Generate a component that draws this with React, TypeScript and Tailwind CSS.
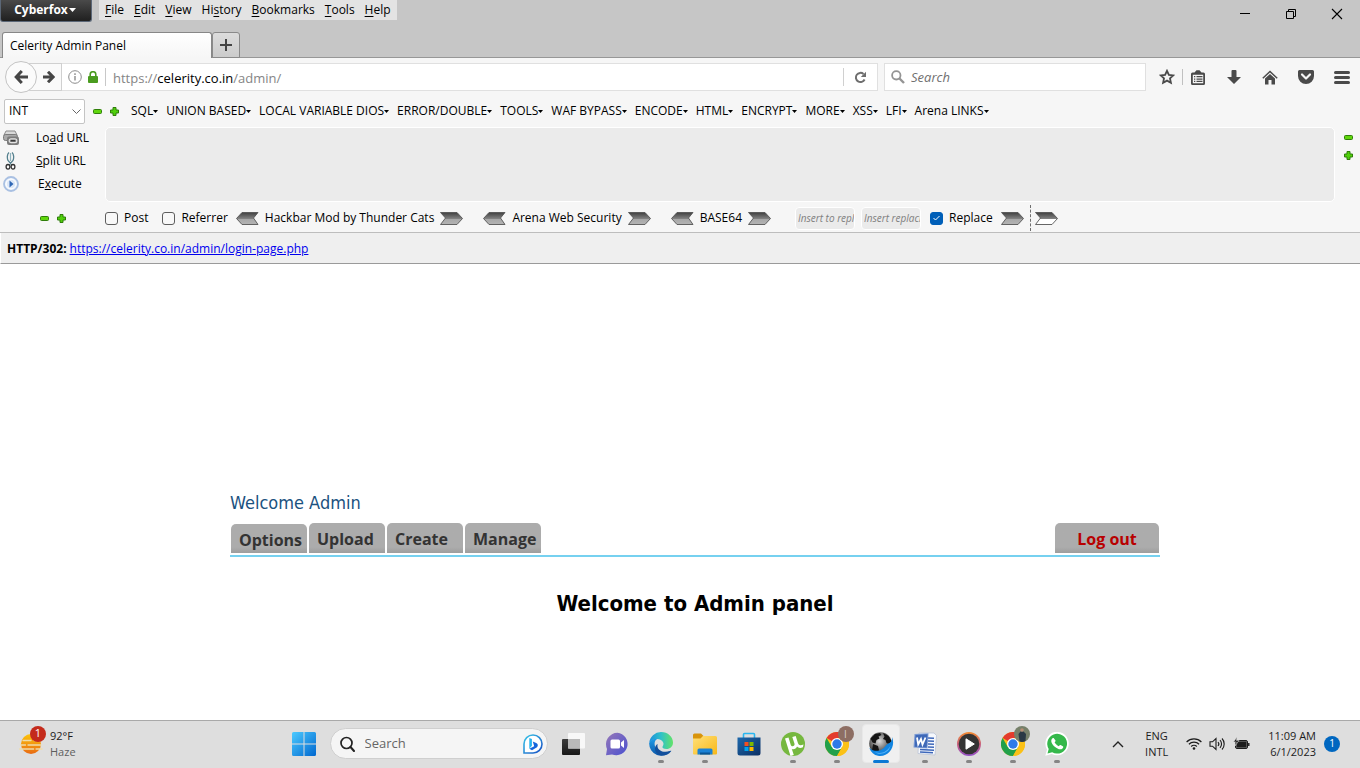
import { useState, type ReactNode } from "react";

/* ---------- shared glyphs ---------- */

function Minus() {
  return (
    <svg width="9" height="9" viewBox="0 0 9 9" aria-hidden="true">
      <rect x="0.5" y="2.5" width="8" height="4" rx="1" fill="#5fd60c" stroke="#2f7d0a" />
    </svg>
  );
}

function Plus() {
  return (
    <svg width="9" height="9" viewBox="0 0 9 9" aria-hidden="true">
      <path d="M3 .5h3V3h2.500v3H6v2.500H3V6H.5V3H3z" fill="#4fd00a" stroke="#2f7d0a" strokeLinejoin="round" />
    </svg>
  );
}

function Chevron({ left = false, hollow = false }: { left?: boolean; hollow?: boolean }) {
  const id = `chev-${left ? "l" : "r"}-${hollow ? "h" : "f"}`;
  const shape = left ? "M6 .5H22L17.500 6 22 12.500H6L.5 6.500z" : "M.5 .5H17L22.500 6.500 17 12.500H.5L5.500 6z";
  return (
    <svg width="23" height="13" viewBox="0 0 23 13" aria-hidden="true">
      <defs>
        <linearGradient id={id} x1="0" y1="0" x2="0" y2="1">
          <stop offset="0" stopColor="#404040" />
          <stop offset=".5" stopColor="#808080" />
          <stop offset=".52" stopColor={hollow ? "#ffffff" : "#a6a6a6"} />
          <stop offset="1" stopColor={hollow ? "#ffffff" : "#b4b4b4"} />
        </linearGradient>
      </defs>
      <path d={shape} fill={`url(#${id})`} stroke="#555" strokeWidth=".9" />
    </svg>
  );
}

function Caret() {
  return (
    <svg width="5" height="3" viewBox="0 0 5 3" aria-hidden="true">
      <path d="M0 0h5L2.500 3z" fill="#000" />
    </svg>
  );
}

/* ---------- title bar ---------- */

const menus = [
  ["", "F", "ile"],
  ["", "E", "dit"],
  ["", "V", "iew"],
  ["Hi", "s", "tory"],
  ["", "B", "ookmarks"],
  ["", "T", "ools"],
  ["", "H", "elp"],
];

function TitleBar() {
  return (
    <header className="flex h-[58px] flex-col justify-between bg-[#c6c6c6] shadow-[inset_0_-1px_0_#979797]">
      <div className="flex items-start">
        <button className="flex h-[22px] w-[92px] items-center justify-center gap-px rounded-b-[3px] border border-t-0 border-[#5b6777] bg-linear-to-b from-[#4a4a4a] to-[#202020] pr-0.5 pb-0.5 text-[12px] font-bold text-white">
          Cyberfox
          <svg width="7" height="4" viewBox="0 0 7 4" aria-hidden="true">
            <path d="M0 0h7L3.500 4z" fill="#fff" />
          </svg>
        </button>
        <nav className="ml-[7px] flex h-5 items-center gap-2.5 bg-[#e3e3e3] px-1.5">
          {menus.map(([a, key, b]) => (
            <button key={key + b} className="leading-5">
              {a}
              <span className="underline underline-offset-2">{key}</span>
              {b}
            </button>
          ))}
        </nav>
        <div className="ml-auto flex h-7 items-center">
          <button aria-label="Minimize" className="flex w-[46px] justify-center">
            <svg width="10" height="10" viewBox="0 0 10 10"><path d="M0 4.500h10" stroke="#000" /></svg>
          </button>
          <button aria-label="Restore" className="flex w-[46px] justify-center">
            <svg width="10" height="10" viewBox="0 0 10 10" fill="none" stroke="#000"><path d="M.5 2.500h7v7h-7zM2.500 2V.5h7v7H8" /></svg>
          </button>
          <button aria-label="Close" className="flex w-[46px] justify-center">
            <svg width="12" height="12" viewBox="0 0 12 12"><path d="M1 1l10 10M11 1L1 11" stroke="#000" strokeWidth="1.100" /></svg>
          </button>
        </div>
      </div>
      <div className="flex items-end pl-0.5">
        <button className="h-[26px] w-[210px] rounded-t-[3px] border border-b-0 border-[#878787] bg-linear-to-b from-white to-[#f6f6f6] px-[7px] text-left">
          Celerity Admin Panel
        </button>
        <button aria-label="New tab" className="flex h-[26px] w-7 items-center justify-center rounded-t-[3px] border border-[#8a8a8a] bg-linear-to-b from-[#dcdcdc] to-[#cbcbcb]">
          <svg width="12" height="12" viewBox="0 0 12 12"><path d="M6 0v12M0 6h12" stroke="#444" strokeWidth="2" /></svg>
        </button>
      </div>
    </header>
  );
}

/* ---------- navigation bar ---------- */

function AddressField() {
  const [url, setUrl] = useState("https://celerity.co.in/admin/");
  const parts = /^(\w+:\/\/)?([^/]*)(.*)$/.exec(url);
  return (
    <div className="grid min-w-0 flex-1 items-center pt-px text-[13px] leading-5">
      <div aria-hidden="true" className="col-start-1 row-start-1 overflow-hidden whitespace-pre text-[#858585]">
        {parts?.[1]}
        <span className="text-black">{parts?.[2]}</span>
        {parts?.[3]}
      </div>
      <input
        aria-label="Address"
        value={url}
        onChange={(e) => setUrl(e.target.value)}
        className="col-start-1 row-start-1 w-full bg-transparent text-transparent caret-black outline-none"
      />
    </div>
  );
}

function ToolButton({ label, className = "", children }: { label: string; className?: string; children: ReactNode }) {
  return (
    <button aria-label={label} className={`flex size-9 items-center justify-center ${className}`}>
      {children}
    </button>
  );
}

function NavBar() {
  return (
    <div className="flex h-[38px] items-center pl-[5px]">
      <button aria-label="Back" className="z-10 flex size-8 shrink-0 items-center justify-center rounded-full border border-[#c4c4c4] bg-[#fbfbfb]">
        <svg width="14" height="14" viewBox="0 0 14 14" fill="none" stroke="#464646" strokeWidth="3"><path d="M7.800 1L2.200 7l5.600 6M2.500 7H14" /></svg>
      </button>
      <button aria-label="Forward" className="-ml-2 flex h-7 w-[33px] shrink-0 items-center justify-end border border-[#d0d0d0] bg-[#fafafa] pr-1.5">
        <svg width="12" height="12" viewBox="0 0 12 12" fill="none" stroke="#464646" strokeWidth="3"><path d="M5 .8L10.200 6 5 11.200M10 6H0" /></svg>
      </button>
      <div className="flex h-7 min-w-0 flex-1 items-center border border-l-0 border-[#e0e0e0] bg-white pl-1.5">
        <svg width="14" height="14" viewBox="0 0 14 14" fill="none" aria-hidden="true">
          <circle cx="7" cy="7" r="6.300" stroke="#8c8c8c" />
          <path d="M7 6v4.500M7 3.300v1.600" stroke="#8c8c8c" strokeWidth="1.400" />
        </svg>
        <svg width="10" height="12" viewBox="0 0 10 12" className="ml-1.5 shrink-0" aria-hidden="true">
          <path d="M2.200 6V3.500a2.800 2.800 0 0 1 5.600 0V6" fill="none" stroke="#4a9c1f" strokeWidth="1.600" />
          <rect y="5" width="10" height="7" rx="1" fill="#4a9c1f" />
        </svg>
        <span className="mx-[7px] h-[18px] w-px shrink-0 bg-[#c8c8c8]" />
        <AddressField />
        <button aria-label="Reload" className="flex h-[18px] w-[34px] shrink-0 items-center justify-center border-l border-[#d0d0d0]">
          <svg width="13" height="13" viewBox="0 0 13 13" aria-hidden="true">
            <path d="M10.600 8.500A4.600 4.600 0 1 1 9.500 3" fill="none" stroke="#6e6e6e" strokeWidth="2" />
            <path d="M12 .8V6H6.800z" fill="#6e6e6e" />
          </svg>
        </button>
      </div>
      <label className="ml-1.5 flex h-7 w-[262px] shrink-0 items-center gap-1.5 border border-[#e0e0e0] bg-white pl-1.5">
        <svg width="14" height="14" viewBox="0 0 14 14" fill="none" stroke="#949494" aria-hidden="true">
          <circle cx="5.300" cy="5.300" r="4.200" strokeWidth="1.800" />
          <path d="M8.500 8.500L13 13" strokeWidth="2.400" />
        </svg>
        <input aria-label="Search" placeholder="Search" className="min-w-0 flex-1 pt-0.5 text-[13px] outline-none placeholder:text-[#707070] placeholder:italic" />
      </label>
      <div className="ml-[3px] flex items-center text-[#4a4a4a]">
        <ToolButton label="Bookmark this page" className="-mr-[3px]">
          <svg width="16" height="16" viewBox="0 0 16 16" fill="none" stroke="currentColor" strokeWidth="1.800"><path d="M8 1.800l1.900 4.100 4.400.5-3.300 3 .9 4.400L8 11.600l-3.900 2.200.9-4.400-3.300-3 4.400-.5z" /></svg>
        </ToolButton>
        <span className="h-4 w-px bg-[#c0c0c0]" />
        <ToolButton label="Reading list" className="-ml-[3px]">
          <svg width="14" height="15" viewBox="0 0 14 15" fill="currentColor">
            <path fillRule="evenodd" d="M3.500 2.500L5.500.3h3l2 2.200h2A1.500 1.500 0 0 1 14 4v9.500a1.500 1.500 0 0 1-1.500 1.500h-11A1.500 1.500 0 0 1 0 13.500V4a1.500 1.500 0 0 1 1.500-1.500zM1.800 4.800v8.400h10.400V4.800z" />
            <path d="M3 6h1.300v1.300H3zM5.500 6h6v1.300h-6zM3 8.400h1.300v1.300H3zM5.500 8.400h6v1.300h-6zM3 10.800h1.300v1.300H3zM5.500 10.800h6v1.300h-6z" />
          </svg>
        </ToolButton>
        <ToolButton label="Downloads">
          <svg width="14" height="14" viewBox="0 0 14 14" fill="currentColor"><path d="M4.500 1a1 1 0 0 1 1-1h3a1 1 0 0 1 1 1v6H14L7 14 0 7h4.500z" /></svg>
        </ToolButton>
        <ToolButton label="Home">
          <svg width="16" height="15" viewBox="0 0 16 15"><path d="M.8 8.300L8 1.500l7.200 6.800" fill="none" stroke="currentColor" strokeWidth="1.500" /><path d="M8 4L3 8.600V14.500h3.500V10h3v4.500H13V8.600z" fill="currentColor" /></svg>
        </ToolButton>
        <ToolButton label="Save to Pocket">
          <svg width="16" height="14" viewBox="0 0 16 14"><path d="M1.500 0h13A1.500 1.500 0 0 1 16 1.500V6A8 8 0 0 1 0 6V1.500A1.500 1.500 0 0 1 1.500 0z" fill="currentColor" /><path d="M4 4.500l4 4 4-4" fill="none" stroke="#f6f6f6" strokeWidth="2.200" strokeLinecap="round" strokeLinejoin="round" /></svg>
        </ToolButton>
        <ToolButton label="Open menu">
          <svg width="16" height="13" viewBox="0 0 16 13" stroke="currentColor" strokeWidth="3" strokeLinecap="round"><path d="M1.500 1.500h13M1.500 6.500h13M1.500 11.500h13" /></svg>
        </ToolButton>
      </div>
    </div>
  );
}

/* ---------- hackbar ---------- */

const hackMenus = ["SQL", "UNION BASED", "LOCAL VARIABLE DIOS", "ERROR/DOUBLE", "TOOLS", "WAF BYPASS", "ENCODE", "HTML", "ENCRYPT", "MORE", "XSS", "LFI", "Arena LINKS"];

function CheckField({ label, checked = false }: { label: string; checked?: boolean }) {
  return (
    <label className="flex items-center gap-1.5">
      <span className="grid size-[13px] place-items-center">
        <input
          type="checkbox"
          defaultChecked={checked}
          className="peer col-start-1 row-start-1 size-[13px] appearance-none rounded-[3px] border border-[#5e5e5e] bg-[#f8f8f8] checked:border-[#005fb8] checked:bg-[#005fb8]"
        />
        <svg width="7" height="6" viewBox="0 0 7 6" className="pointer-events-none invisible col-start-1 row-start-1 peer-checked:visible" aria-hidden="true">
          <path d="M.5 3l2 2 4-4" fill="none" stroke="#fff" />
        </svg>
      </span>
      {label}
    </label>
  );
}

function Stepper({ name, children }: { name: string; children: ReactNode }) {
  return (
    <div className="flex items-center gap-1.5">
      <button aria-label={`Previous ${name}`}><Chevron left /></button>
      <span>{children}</span>
      <button aria-label={`Next ${name}`}><Chevron /></button>
    </div>
  );
}

function PrinterIcon() {
  return (
    <svg width="16" height="15" viewBox="0 0 16 15" aria-hidden="true">
      <path d="M3 1h9l2 4H1z" fill="#d9d9d9" stroke="#8b8b8b" />
      <rect x=".5" y="4.500" width="14" height="6" rx="2" fill="#a9a9a9" stroke="#7b7b7b" />
      <rect x="4" y="6.500" width="12" height="8.500" rx="2" fill="#7c7c7c" />
      <rect x="6.200" y="8.800" width="7.600" height="3.800" rx="1.900" fill="none" stroke="#e4e4e4" strokeWidth="1.200" />
      <path d="M8 10.700h4" stroke="#333" strokeWidth="1.200" />
    </svg>
  );
}

function ScissorsIcon() {
  return (
    <svg width="16" height="18" viewBox="0 0 16 18" fill="none" aria-hidden="true">
      <path d="M6 .5C4 2 4 6 5 8.500L9 13M9 .5C11 2 11 6 10 8.500L6 13" stroke="#54808e" strokeWidth="1.300" />
      <path d="M7.500 1v8" stroke="#8fb2bd" strokeWidth="1.200" />
      <ellipse cx="5" cy="14.800" rx="1.900" ry="2.300" stroke="#333" strokeWidth="1.300" />
      <ellipse cx="10" cy="14.800" rx="1.900" ry="2.300" stroke="#333" strokeWidth="1.300" />
    </svg>
  );
}

function ExecuteIcon() {
  return (
    <svg width="16" height="16" viewBox="0 0 16 16" aria-hidden="true">
      <circle cx="8" cy="8" r="7" fill="#eef4fc" stroke="#a9c0e2" strokeWidth="1.800" />
      <circle cx="8" cy="8" r="4.800" fill="#dce8f8" stroke="#fff" />
      <path d="M6.500 4.500L10.500 8l-4 3.500z" fill="#2f67b5" />
    </svg>
  );
}

function Hackbar() {
  return (
    <section aria-label="Hackbar" className="flex flex-col border-b border-[#bdbdbd] pb-0.5">
      <div className="flex h-[30px] items-center pl-1">
        <div className="grid h-[25px] w-[81px] shrink-0 items-center">
          <select aria-label="Injection type" className="col-start-1 row-start-1 h-[25px] appearance-none rounded-[2px] border border-[#c4c4c4] bg-white px-1">
            <option>INT</option>
            <option>STRING</option>
          </select>
          <svg width="9" height="5" viewBox="0 0 9 5" className="pointer-events-none col-start-1 row-start-1 mr-1 justify-self-end" aria-hidden="true">
            <path d="M.5 .5l4 4 4-4" fill="none" stroke="#666" />
          </svg>
        </div>
        <button aria-label="Remove" className="ml-2"><Minus /></button>
        <button aria-label="Add" className="ml-2"><Plus /></button>
        <div className="ml-3 flex items-center gap-2 whitespace-nowrap">
          {hackMenus.map((m) => (
            <button key={m} className="flex items-center">
              {m}
              <Caret />
            </button>
          ))}
        </div>
      </div>
      <div className="flex">
        <div className="flex w-[105px] shrink-0 flex-col pl-[3px]">
          <button className="flex h-[23px] items-center gap-[17px]"><PrinterIcon /><span>Lo<u>a</u>d URL</span></button>
          <button className="flex h-[23px] items-center gap-[17px]"><ScissorsIcon /><span><u>S</u>plit URL</span></button>
          <button className="flex h-[23px] items-center gap-[19px]"><ExecuteIcon /><span>E<u>x</u>ecute</span></button>
        </div>
        <textarea aria-label="Request URL" className="mt-px h-[75px] min-w-0 flex-1 resize-none rounded-[5px] border border-white bg-[#ebebeb] outline-none" />
        <div className="flex w-[25px] flex-col items-center gap-[9px] pt-[7px] pl-0.5">
          <button aria-label="Shrink field"><Minus /></button>
          <button aria-label="Grow field"><Plus /></button>
        </div>
      </div>
      <div className="flex h-7 items-center pt-1 whitespace-nowrap">
        <div className="flex w-[105px] shrink-0 gap-2 pl-10">
          <button aria-label="Smaller"><Minus /></button>
          <button aria-label="Larger"><Plus /></button>
        </div>
        <div className="flex items-center gap-3.5">
          <CheckField label="Post" />
          <CheckField label="Referrer" />
        </div>
        <div className="ml-2 flex items-center gap-5">
          <Stepper name="Hackbar Mod">Hackbar Mod by Thunder Cats</Stepper>
          <Stepper name="Arena">Arena Web Security</Stepper>
          <Stepper name="Base64">BASE64</Stepper>
        </div>
        <div className="ml-6 flex items-center gap-1.5">
          <input aria-label="Text to replace" placeholder="Insert to replace" className="h-[23px] w-[60px] rounded-[4px] border border-white bg-[#ebebeb] pl-0.5 text-[10px] outline-none placeholder:text-[#808080] placeholder:italic" />
          <input aria-label="Replacement" placeholder="Insert replacing" className="h-[23px] w-[60px] rounded-[4px] border border-white bg-[#ebebeb] pl-0.5 text-[10px] outline-none placeholder:text-[#808080] placeholder:italic" />
        </div>
        <div className="ml-[9px] flex items-center gap-2">
          <CheckField label="Replace" checked />
          <button aria-label="Apply replacement"><Chevron /></button>
        </div>
        <span className="ml-1.5 h-[26px] border-l border-dashed border-[#6f6f6f]" />
        <button aria-label="More tools" className="ml-1"><Chevron hollow /></button>
      </div>
    </section>
  );
}

/* ---------- page ---------- */

function Page() {
  return (
    <main className="flex-1 bg-white pl-[30px] font-['DejaVu_Sans_Condensed','DejaVu_Sans',sans-serif]">
      <div className="mx-auto max-w-[930px] pt-[227px]">
        <p className="text-[18px] leading-6 text-[#1b5280]">Welcome Admin</p>
        <nav className="mt-2 flex items-end justify-between border-b-2 border-[#76d1f0] px-px pb-0.5 font-['Open_Sans','Noto_Sans',sans-serif] text-[16px] font-bold text-[#333]">
          <div className="flex items-end gap-0.5">
            {["Options", "Upload", "Create", "Manage"].map((t) => (
              <a key={t} href="#" className="h-[30px] w-[76px] rounded-t-[5px] bg-linear-to-b from-[#acacac] from-80% to-[#9d9d9d] pl-2 leading-8 first:h-[29px]">
                {t}
              </a>
            ))}
          </div>
          <a href="#" className="h-[30px] w-[104px] rounded-t-[5px] bg-linear-to-b from-[#acacac] from-80% to-[#9d9d9d] text-center leading-8 text-[#b80000]">
            Log out
          </a>
        </nav>
        <h1 className="mt-[33px] text-center text-[22px] leading-7 font-bold text-black">Welcome to Admin panel</h1>
      </div>
    </main>
  );
}

/* ---------- taskbar ---------- */

function StartIcon() {
  return (
    <svg width="24" height="24" viewBox="0 0 24 24">
      <defs><linearGradient id="start" x1="0" y1="0" x2="1" y2="1" gradientUnits="objectBoundingBox"><stop offset="0" stopColor="#4ccaff" /><stop offset="1" stopColor="#0067cf" /></linearGradient></defs>
      <path d="M1.500 0H11.500V11.500H0V1.500Q0 0 1.500 0zM12.500 0H22.500Q24 0 24 1.500V11.500H12.500zM0 12.500H11.500V24H1.500Q0 24 0 22.500zM12.500 12.500H24V22.500Q24 24 22.500 24H12.500z" fill="url(#start)" />
    </svg>
  );
}

function BingIcon() {
  return (
    <svg width="20" height="20" viewBox="0 0 20 20">
      <defs><linearGradient id="bing" x1="0" y1="0" x2="1" y2="1"><stop offset="0" stopColor="#3cc7e8" /><stop offset="1" stopColor="#174fc4" /></linearGradient></defs>
      <path d="M1 19V10a9 9 0 1 1 9 9z" fill="#fff" stroke="url(#bing)" strokeWidth="1.600" />
      <path d="M6.300 4l2.600 1v6.800l-2.600 3z" fill="#27b4ee" />
      <path d="M9.800 7.500l3.400 1.400a2.600 2.600 0 0 1 .8 4.300L9 16.300 6.300 14.800l4.900-2.500z" fill="#1666dc" />
    </svg>
  );
}

function TaskViewIcon() {
  return (
    <svg width="24" height="24" viewBox="0 0 24 24">
      <defs><linearGradient id="tv" x1="0" y1="0" x2="0" y2="1"><stop offset="0" stopColor="#3c3c3c" /><stop offset="1" stopColor="#181818" /></linearGradient></defs>
      <rect x="1" y="7" width="18" height="16" rx="1" fill="url(#tv)" />
      <rect x="7" y="1" width="17" height="15.500" rx="1" fill="#f8f8f8" />
      <path d="M7 7h12v9.500H7z" fill="#b9b9b9" />
    </svg>
  );
}

function ChatIcon() {
  return (
    <svg width="24" height="24" viewBox="0 0 24 24">
      <defs><linearGradient id="chat" x1="0" y1="0" x2="1" y2="1"><stop offset="0" stopColor="#9678b8" /><stop offset="1" stopColor="#4a50d0" /></linearGradient></defs>
      <path d="M12.500 .8a11.300 11.300 0 1 1-5.500 21.700L1 23.200 2 17A11.500 11.500 0 0 1 12.500 .8z" fill="url(#chat)" />
      <rect x="5.500" y="7.500" width="9.500" height="9" rx="1.500" fill="#fff" />
      <path d="M16 10.500l3-2.500v8l-3-2.500z" fill="#fff" />
    </svg>
  );
}

function EdgeIcon() {
  return (
    <svg width="24" height="24" viewBox="0 0 24 24">
      <defs>
        <linearGradient id="edgeTop" x1="0" y1=".5" x2="1" y2=".5"><stop offset="0" stopColor="#1b8fdc" /><stop offset=".5" stopColor="#2fc1c8" /><stop offset="1" stopColor="#63e368" /></linearGradient>
        <linearGradient id="edgeLow" x1="0" y1="0" x2="0" y2="1"><stop offset="0" stopColor="#1e9be6" /><stop offset="1" stopColor="#0c56a8" /></linearGradient>
      </defs>
      <path d="M.2 11A12 12 0 0 1 12 0c7 0 12 5 12 10.500 0 4-3 6.500-6.500 6.500-3 0-4.500-1.200-4-2.300.8-1.500 1.300-2.700.8-4C13 7.500 10 6.500 7 7 3.500 7.500.8 9 .2 11z" fill="url(#edgeTop)" />
      <path d="M.2 11C1.500 7.500 5 6.300 8.500 6.800c-3 1.500-3.500 5-2.300 8.200 1.800 4.800 8.500 7 15.500 4A12 12 0 0 1 .2 11z" fill="url(#edgeLow)" />
      <path d="M8.700 12c-1.700 5.500 5 10 13 6.700.5-.2.700.1.400.5-3.500 4.800-9.500 5.300-13 3C5 19.500 5 14 8.700 12z" fill="#124f9c" />
    </svg>
  );
}

function ExplorerIcon() {
  return (
    <svg width="24" height="24" viewBox="0 0 24 24">
      <defs><linearGradient id="fold" x1="0" y1="0" x2="1" y2="1"><stop offset="0" stopColor="#ffe07a" /><stop offset="1" stopColor="#f8b818" /></linearGradient></defs>
      <path d="M0 3a1.500 1.500 0 0 1 1.500-1.500H8L10.500 4 8 7H0z" fill="#d8940c" />
      <path d="M0 6.500h7.500L10 4h12.500A1.500 1.500 0 0 1 24 5.500V21.500a1 1 0 0 1-1 1H1a1 1 0 0 1-1-1z" fill="url(#fold)" />
      <path d="M4.500 22.500V18a1.500 1.500 0 0 1 1.500-1.500h12a1.500 1.500 0 0 1 1.500 1.500v4.500z" fill="#1b82d6" />
      <path d="M7 20.500h10v2H7z" fill="#0a5596" />
    </svg>
  );
}

function StoreIcon() {
  return (
    <svg width="24" height="24" viewBox="0 0 24 24">
      <defs><linearGradient id="store" x1="0" y1="0" x2="1" y2="1"><stop offset="0" stopColor="#1d68ac" /><stop offset="1" stopColor="#0c2f63" /></linearGradient></defs>
      <path d="M6.500 6V2.500a1 1 0 0 1 1-1h9a1 1 0 0 1 1 1V6" fill="none" stroke="#28b6f0" strokeWidth="1.600" />
      <path d="M.5 5.500h23V21a2.500 2.500 0 0 1-2.500 2.500H3A2.500 2.500 0 0 1 .5 21z" fill="url(#store)" />
      <path d="M7.500 10h4v4h-4z" fill="#f25022" /><path d="M12.500 10h4v4h-4z" fill="#7fba00" /><path d="M7.500 15h4v4h-4z" fill="#00a4ef" /><path d="M12.500 15h4v4h-4z" fill="#ffb900" />
    </svg>
  );
}

function TorrentIcon() {
  return (
    <svg width="24" height="24" viewBox="0 0 24 24">
      <circle cx="12" cy="12" r="12" fill="#76b83f" />
      <path d="M4 6.500l3.500-1 2.300 7.500c.8 2.300 4.400 1.300 3.700-1.200L11.300 5l3.400-1 2.300 7.300c.7 2 2.500 2.400 5.500 1.200l-.6 2.700c-2.400 1.300-4.700.8-5.900-.7-.9 2.400-3.200 3.200-5.200 2.400l2 6-3.300 1z" fill="#fff" />
    </svg>
  );
}

function ChromeIcon() {
  return (
    <svg width="24" height="24" viewBox="0 0 24 24">
      <circle cx="12" cy="12" r="12" fill="#fbc116" />
      <path d="M12 12L1.600 6A12 12 0 0 1 22.400 6H12z" fill="#e33b2e" />
      <path d="M1.600 6A12 12 0 0 0 12 24l5.200-9L12 12 6.800 15z" fill="#22a04a" />
      <path d="M12 6H22.400A12 12 0 0 1 12 24l5.200-9z" fill="#fbc116" />
      <circle cx="12" cy="12" r="6" fill="#fff" />
      <circle cx="12" cy="12" r="4.700" fill="#2d7ae8" />
    </svg>
  );
}

function GlobeIcon() {
  return (
    <svg width="26" height="24" viewBox="0 0 26 24">
      <defs><radialGradient id="globe" cx=".45" cy=".4" r=".65"><stop offset="0" stopColor="#dcdcdc" /><stop offset=".5" stopColor="#7c7c7c" /><stop offset="1" stopColor="#161616" /></radialGradient></defs>
      <circle cx="12.500" cy="11.500" r="11.300" fill="url(#globe)" />
      <path d="M2.500 6.500L7 2l5-1 1.500 2-3 1.500 1 2-3 1.500-1 3.500-3-1zM15 1l5.500 3 3 5-2.500 3-2.500-1-1-3-2.500-1 1.500-2.500zM5 12l5 2 1 4-2.500 3.500L4 18.500z" fill="#141414" />
      <path d="M24 5C28 14 21 25.500 10 23.700c-4-.6-7-3.200-8.700-7.700C6 20 12 19.500 15.500 16.300c1.800-1.700 2.500-3.800 4.800-4.800C23 10.300 24.300 8.500 24 5z" fill="#1285e0" />
      <path d="M5 19.300c6.500 3.200 14 1.700 17.500-5.800-1.200 6.500-8 9.500-13.500 7.700z" fill="#5ab6fa" />
    </svg>
  );
}

function WordIcon() {
  return (
    <svg width="24" height="24" viewBox="0 0 24 24">
      <path d="M6 1h15l2.500 2.500-1.500 19.500L5 21.500z" fill="#f6f8fc" stroke="#b3bfd4" strokeWidth=".7" />
      <path d="M15 6l6 .3M15 9l6 .3M15 12l6 .3M15 15l6 .3M7 17.500l14 .8M7 20l13 .8" stroke="#3e68ba" strokeWidth="1.600" />
      <path d="M1.500 2l14-.8L14.500 16.500 .5 15.500z" fill="#7a9ad4" />
      <path d="M2.500 3l12-.8-.8 13.200-12-.6z" fill="#3f69b8" />
      <path d="M4 5.500l1.200 7L8 7l1.500 5.500 3-7" fill="none" stroke="#fff" strokeWidth="1.800" />
    </svg>
  );
}

function MediaIcon() {
  return (
    <svg width="24" height="24" viewBox="0 0 24 24">
      <defs><linearGradient id="media" x1="0" y1="0" x2="0" y2="1"><stop offset="0" stopColor="#f38a2e" /><stop offset=".6" stopColor="#c05c8c" /><stop offset="1" stopColor="#9150c8" /></linearGradient></defs>
      <circle cx="12" cy="12" r="12" fill="url(#media)" />
      <circle cx="12" cy="12" r="10.300" fill="#333" />
      <path d="M9 6.800v10.400L17.300 12z" fill="#fff" stroke="#fff" strokeLinejoin="round" />
    </svg>
  );
}

function WhatsAppIcon() {
  return (
    <svg width="24" height="24" viewBox="0 0 24 24">
      <path d="M.3 23.700L2 17.500A11.700 11.700 0 1 1 6.800 22z" fill="#fff" />
      <path d="M2.500 21.500l1.200-4.600A9.900 9.900 0 1 1 7.200 20.300z" fill="#35b84b" />
      <path d="M9 6.500c-.5-.8-1.500-.6-2.200.5-1.500 2.500.5 5.500 3 7.800 2.700 2.300 5.700 3.500 7.700 1.700 1-1 .9-1.800.3-2.200l-2.200-1.200c-.5-.2-.9.1-1.600 1-.5.500-3.700-2-4.400-3.800.9-.9 1.100-1.300.9-1.800z" fill="#fff" />
    </svg>
  );
}

function TaskButton({ label, state = "idle", badge, children }: { label: string; state?: "idle" | "running" | "active"; badge?: ReactNode; children: ReactNode }) {
  return (
    <button
      aria-label={label}
      className={`relative mx-[3px] flex h-[39px] w-[38px] items-center justify-center rounded-[4px] ${state === "active" ? "border border-[#e8e8e8] bg-[#f0f0f0]" : ""}`}
    >
      {children}
      {badge}
      {state === "running" && <span className="absolute bottom-0 h-[3px] w-1.5 rounded-full bg-[#858585]" />}
      {state === "active" && <span className="absolute -bottom-px h-[3px] w-4 rounded-full bg-[#0b78d4]" />}
    </button>
  );
}

function WeatherIcon() {
  return (
    <span className="relative block h-7 w-[27px]">
      <svg width="24" height="24" viewBox="0 0 24 24" className="mt-0.5" aria-hidden="true">
        <defs><linearGradient id="sun" x1="0" y1="0" x2="0" y2="1"><stop offset="0" stopColor="#fdc50a" /><stop offset="1" stopColor="#e86a14" /></linearGradient></defs>
        <circle cx="12" cy="12" r="10" fill="url(#sun)" />
        <path d="M4 8.500h8M15 8.500h6M1.500 13h5M9 13h13M.7 17h14M17 17h6" stroke="#f0dca8" strokeWidth="1.300" strokeLinecap="round" />
      </svg>
      <span className="absolute -top-1 right-0 flex size-4 items-center justify-center rounded-full bg-[#c42b1c] text-[11px] text-white">1</span>
    </span>
  );
}

function Taskbar() {
  return (
    <footer className="grid h-12 grid-cols-[1fr_auto_1fr] items-center border-t border-[#a9a9a9] bg-[#dedede] pb-0.5 text-[11px] text-[#1c1c1c]">
      <button className="flex items-center gap-1 pl-[19px] text-left">
        <WeatherIcon />
        <span className="leading-4">
          92°F
          <span className="block text-[#5e5e5e]">Haze</span>
        </span>
      </button>
      <div className="flex items-center">
        <button aria-label="Start" className="mr-1 flex w-11 justify-center"><StartIcon /></button>
        <label className="mr-[3px] flex h-[31px] w-[218px] items-center rounded-full border border-[#cfcfcf] bg-[#f5f5f5] pr-1 pl-2">
          <svg width="16" height="16" viewBox="0 0 16 16" fill="none" stroke="#222" aria-hidden="true"><circle cx="7.500" cy="7" r="5.500" strokeWidth="1.700" /><path d="M11.500 11l3.500 4" strokeWidth="2" strokeLinecap="round" /></svg>
          <input aria-label="Taskbar search" placeholder="Search" className="ml-2.5 min-w-0 flex-1 pt-px text-[13px] outline-none placeholder:text-[#666]" />
          <BingIcon />
        </label>
        <TaskButton label="Task view"><TaskViewIcon /></TaskButton>
        <TaskButton label="Chat"><ChatIcon /></TaskButton>
        <TaskButton label="Edge" state="running"><EdgeIcon /></TaskButton>
        <TaskButton label="File Explorer" state="running"><ExplorerIcon /></TaskButton>
        <TaskButton label="Store"><StoreIcon /></TaskButton>
        <TaskButton label="Torrent" state="running"><TorrentIcon /></TaskButton>
        <TaskButton
          label="Chrome"
          state="running"
          badge={<span className="absolute top-0.5 right-0.5 flex size-4 items-center justify-center rounded-full bg-[#8d6e63] text-[10px] text-[#d7ccc8]">I</span>}
        >
          <ChromeIcon />
        </TaskButton>
        <TaskButton label="Cyberfox" state="active"><GlobeIcon /></TaskButton>
        <TaskButton label="Word" state="running"><WordIcon /></TaskButton>
        <TaskButton label="Media Player" state="running"><MediaIcon /></TaskButton>
        <TaskButton
          label="Chrome, second profile"
          state="running"
          badge={
            <svg width="16" height="16" viewBox="0 0 16 16" className="absolute top-0.5 right-0.5">
              <circle cx="8" cy="8" r="8" fill="#76806a" />
              <path d="M5.500 15.500L4.500 8l2-2.500h3L12 8l-.5 7A8 8 0 0 1 5.500 15.500z" fill="#2a3945" />
              <circle cx="8" cy="4" r="1.800" fill="#b68e76" />
            </svg>
          }
        >
          <ChromeIcon />
        </TaskButton>
        <TaskButton label="WhatsApp" state="running"><WhatsAppIcon /></TaskButton>
      </div>
      <div className="flex items-center justify-end pr-5">
        <button aria-label="Show hidden icons" className="mr-[21px]">
          <svg width="12" height="8" viewBox="0 0 12 8" fill="none" stroke="#222" strokeWidth="1.400"><path d="M1 7l5-5 5 5" /></svg>
        </button>
        <button className="mr-[18px] text-center leading-4">ENG<br />INTL</button>
        <button aria-label="Network, volume and battery" className="mr-[18px] flex items-center gap-[7px]">
          <svg width="16" height="13" viewBox="0 0 16 13" fill="none" stroke="#1c1c1c" strokeWidth="1.200">
            <path d="M.6 5a10.500 10.500 0 0 1 14.800 0M2.900 7.300a7.300 7.300 0 0 1 10.200 0M5.200 9.500a4 4 0 0 1 5.600 0" />
            <circle cx="8" cy="11.500" r="1.300" fill="#1c1c1c" stroke="none" />
          </svg>
          <svg width="17" height="14" viewBox="0 0 17 14" fill="none" stroke="#1c1c1c" strokeWidth="1.100">
            <path d="M1 4.800h2.500L7 1.500v11L3.500 9.200H1zM9 5a3 3 0 0 1 0 4M11 3.200a5.500 5.500 0 0 1 0 7.600M13 1.500a8 8 0 0 1 0 11" />
          </svg>
          <svg width="17" height="13" viewBox="0 0 17 13">
            <rect x="2.500" y="3.500" width="12" height="8" rx="1.500" fill="#8a8a8a" stroke="#1c1c1c" />
            <rect x="3.500" y="4.500" width="10" height="6" fill="#1c1c1c" />
            <path d="M15.800 6v3" stroke="#1c1c1c" strokeWidth="1.400" />
            <path d="M4 0L.5 5h2.800L2 9l4-5.500H3.500z" fill="#1c1c1c" stroke="#dedede" strokeWidth=".6" />
          </svg>
        </button>
        <button className="mr-2 text-right leading-4">11:09 AM<br />6/1/2023</button>
        <button aria-label="Notifications" className="flex size-4 items-center justify-center rounded-full bg-[#0067c0] text-[10px] text-white">1</button>
      </div>
    </footer>
  );
}

export default function App() {
  return (
    <div className="flex min-h-screen flex-col bg-[#f6f6f6] font-['Open_Sans','Noto_Sans',sans-serif] text-[12px] text-black">
      <TitleBar />
      <NavBar />
      <Hackbar />
      <div className="flex h-[31px] items-center gap-[3px] border-b border-l border-[#9a9a9a] border-l-white bg-[#efefef] pt-0.5 pl-1.5">
        <strong>HTTP/302:</strong>
        <a href="#" className="text-[#0000ee] underline">https://celerity.co.in/admin/login-page.php</a>
      </div>
      <Page />
      <Taskbar />
    </div>
  );
}
